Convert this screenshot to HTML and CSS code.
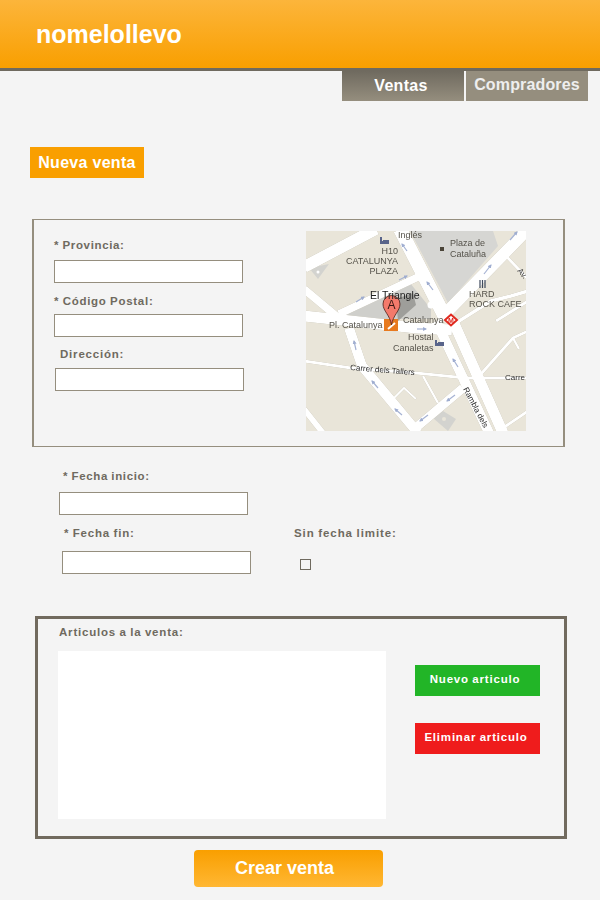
FILE: index.html
```html
<!DOCTYPE html>
<html lang="es">
<head>
<meta charset="utf-8">
<title>nomelollevo</title>
<link rel="stylesheet" href="styles.css">
</head>
<body>
<header class="site-header"><h1 class="brand">nomelollevo</h1></header>
<nav class="tabs">
  <a class="tab tab-active">Ventas</a>
  <a class="tab tab-idle">Compradores</a>
</nav>
<h2 class="page-title">Nueva venta</h2>
<form>
  <section class="location">
    <div class="location-fields">
      <label class="lbl lbl-prov">* Provincia:</label>
      <input class="txt txt-prov" type="text">
      <label class="lbl lbl-cp">* Código Postal:</label>
      <input class="txt txt-cp" type="text">
      <label class="lbl lbl-dir">Dirección:</label>
      <input class="txt txt-dir" type="text">
    </div>
    <svg class="map" viewBox="0 0 220 200" width="220" height="200" role="img" aria-label="Mapa">
      <defs>
        <marker id="arrowhead" markerWidth="4" markerHeight="4" refX="3" refY="2" orient="auto" markerUnits="userSpaceOnUse">
          <path d="M0 0 L4 2 L0 4 Z" fill="#9fadd0"/>
        </marker>
      </defs>
      <rect width="220" height="200" fill="#e9e5d9"/>
      <polygon points="104,0 187,0 192,15 142,72" fill="#d6d6d3"/>
      <polygon points="33,84 104,52 125,78 125,88 50,88" fill="#cfcfcb"/>
      <polygon points="3,37 23,33 12,48" fill="#d3d3cf"/>
      <polygon points="127,187 137,180 150,188 142,200" fill="#d3d3cf"/>
      <g class="roads" fill="none" stroke="#fff">
        <path d="M-2 36 L70 -2" stroke-width="12"/>
        <path d="M-2 58 L35 89" stroke-width="8"/>
        <path d="M-2 85 L110 97 L146 99" stroke-width="11"/>
        <path d="M33 83 L112 46" stroke-width="8"/>
        <path d="M94 -2 L140 88" stroke-width="14"/>
        <path d="M138 84 L222 -2" stroke-width="12"/>
        <path d="M200 25 L222 48" stroke-width="3"/>
        <path d="M150 92 L185 70 L205 65 L222 60" stroke-width="3.500"/>
        <path d="M190 90 L222 70" stroke-width="3"/>
        <path d="M130 90 L183 202" stroke-width="10"/>
        <path d="M147 90 L197 202" stroke-width="11"/>
        <path d="M43 97 L56 135 L112 202" stroke-width="10"/>
        <path d="M-2 130 L45 137 L110 142 L160 147 L222 147" stroke-width="3"/>
        <path d="M106 200 L157 157" stroke-width="9"/>
        <path d="M117 145 L132 172" stroke-width="2.500"/>
        <path d="M175 143 L207 107 L222 100" stroke-width="3"/>
        <path d="M207 107 L213 118" stroke-width="2.500"/>
        <path d="M197 197 L222 180" stroke-width="3"/>
        <path d="M87 168 L98 157 L110 168" stroke-width="2"/>
        <path d="M-2 178 L17 202" stroke-width="6"/>
      </g>
      <circle cx="125" cy="74" r="3.500" fill="#fff"/>
      <circle cx="12" cy="41" r="1.500" fill="#fff"/>
      <circle cx="138" cy="188" r="2" fill="#e9e5d9"/>
      <g fill="none" stroke="#a5b2d3" stroke-width="1.200">
        <path d="M50 71 L58 66" marker-end="url(#arrowhead)"/>
        <path d="M93 49 L101 45" marker-end="url(#arrowhead)"/>
        <path d="M101 20 L96 13" marker-end="url(#arrowhead)"/>
        <path d="M127 59 L121 51" marker-end="url(#arrowhead)"/>
        <path d="M178 43 L185 34" marker-end="url(#arrowhead)"/>
        <path d="M204 9 L211 1" marker-end="url(#arrowhead)"/>
        <path d="M111 98 L120 98" marker-end="url(#arrowhead)"/>
        <path d="M50 119 L48 110" marker-end="url(#arrowhead)"/>
        <path d="M72 157 L66 150" marker-end="url(#arrowhead)"/>
        <path d="M96 184 L89 178" marker-end="url(#arrowhead)"/>
        <path d="M152 136 L147 128" marker-end="url(#arrowhead)"/>
        <path d="M149 164 L141 170" marker-end="url(#arrowhead)"/>
        <path d="M122 184 L114 190" marker-end="url(#arrowhead)"/>
      </g>
      <rect x="78" y="88" width="14" height="12" fill="#e87a1f"/>
      <path d="M82 98 L89 92" stroke="#fff" stroke-width="2"/>
      <polygon points="90,68 107,62 110,74 92,90" fill="#8d8d8a" opacity=".75"/>
      <path d="M85.500 94 C84 84 77 80 77 73 A8.500 8.500 0 1 1 94 73 C94 80 87 84 85.500 94 Z" fill="#f47a6b" stroke="#4a1f18" stroke-width=".8"/>
      <polygon points="139,89 145,83.500 151,89 145,94.500" fill="#fff" stroke="#e0291f" stroke-width="2"/>
      <text class="m m-pin" x="85.500" y="78" text-anchor="middle">A</text>
      <text class="m m-metro" x="145" y="91.500" text-anchor="middle">M</text>
      <text class="m" x="92" y="7">Inglés</text>
      <text class="m" x="144" y="15">Plaza de</text>
      <text class="m" x="144" y="26">Cataluña</text>
      <rect x="134" y="16" width="4" height="4" fill="#4a4438"/>
      <text class="m" x="92" y="23" text-anchor="end">H10</text>
      <text class="m" x="92" y="33" text-anchor="end">CATALUNYA</text>
      <text class="m" x="92" y="43" text-anchor="end">PLAZA</text>
      <path d="M74 6 v7 h9 v-4 h-6 v1 h-1 v-4 Z" fill="#59648a"/>
      <path d="M174 49 v8 M176.500 49 v8 M179 49 v8" stroke="#3f4a5e" stroke-width="1.200"/>
      <text class="m" x="163" y="66">HARD</text>
      <text class="m" x="163" y="76">ROCK CAFE</text>
      <text class="m m-big" x="64" y="68">El Triangle</text>
      <text class="m" x="23" y="96.500">Pl. Catalunya</text>
      <text class="m" x="97" y="92">Catalunya</text>
      <text class="m" x="102" y="109">Hostal</text>
      <text class="m" x="87" y="120">Canaletas</text>
      <path d="M129 109 v6 h9 v-4 h-6 v1 h-1 v-3 Z" fill="#59648a"/>
      <text class="m m-road" x="44" y="139" transform="rotate(4.500 44 139)">Carrer dels Tallers</text>
      <text class="m m-road" x="199" y="149">Carre</text>
      <text class="m m-road" x="157" y="158" transform="rotate(62 157 158)">Rambla dels</text>
      <text class="m m-road" x="211" y="40" transform="rotate(50 211 40)">Av.</text>
    </svg>
  </section>
  <section class="dates">
    <label class="lbl lbl-start">* Fecha inicio:</label>
    <input class="txt txt-start" type="text">
    <div class="end-row">
      <div class="end-col">
        <label class="lbl lbl-end">* Fecha fin:</label>
        <input class="txt txt-end" type="text">
      </div>
      <div class="nolimit-col">
        <label class="lbl lbl-nolimit">Sin fecha limite:</label>
        <input class="check" type="checkbox">
      </div>
    </div>
  </section>
  <section class="items">
    <label class="lbl lbl-items">Articulos a la venta:</label>
    <div class="items-body">
      <div class="items-list"></div>
      <div class="items-actions">
        <button class="action action-new" type="button">Nuevo articulo</button>
        <button class="action action-del" type="button">Eliminar articulo</button>
      </div>
    </div>
  </section>
  <button class="submit" type="button">Crear venta</button>
</form>
</body>
</html>
```
FILE: styles.css
```css
* { box-sizing: border-box; }
html, body { margin: 0; padding: 0; }
body {
  width: 600px;
  height: 900px;
  overflow: hidden;
  background: #f4f4f4;
  font-family: "Liberation Sans", Arial, sans-serif;
  color: #6f6a5f;
}
.site-header {
  height: 71px;
  padding: 21px 0 0 36px;
  background: linear-gradient(#fcb53b, #f99f00) no-repeat 0 0 / 100% 68px;
  border-bottom: 3px solid #6f6a5f;
}
.brand {
  margin: 0;
  font-size: 25px;
  line-height: 27px;
  font-weight: bold;
  color: #fff;
}
.tabs {
  display: flex;
  justify-content: flex-end;
  gap: 2px;
  padding-right: 12px;
}
.tab {
  display: block;
  width: 122px;
  height: 30px;
  font-size: 16px;
  font-weight: bold;
  text-align: center;
}
.tab-active {
  padding: 5px 4px 0 0;
  line-height: 20px;
  letter-spacing: .3px;
  color: #fff;
  background: linear-gradient(#6f6a5f, #958e7e);
}
.tab-idle {
  padding-top: 4px;
  line-height: 20px;
  color: #eeeeee;
  background: #958e7e;
  letter-spacing: .15px;
}
.page-title {
  width: 114px;
  height: 31px;
  margin: 46px 0 0 30px;
  font-size: 16px;
  line-height: 31px;
  font-weight: bold;
  letter-spacing: .3px;
  text-align: center;
  color: #fff;
  background: #f99f00;
}
.location {
  display: flex;
  width: 533px;
  height: 228px;
  margin: 41px 0 0 32px;
  border: solid #958e7e;
  border-width: 1px 2px 1px 2px;
}
.location-fields {
  display: flex;
  flex-direction: column;
  align-items: flex-start;
  width: 272px;
  padding-left: 20px;
}
.lbl {
  display: block;
  height: 14px;
  font-size: 11.500px;
  line-height: 14px;
  font-weight: bold;
  letter-spacing: .8px;
  word-spacing: -.5px;
  white-space: nowrap;
  color: #6f6a5f;
}
.txt {
  display: block;
  width: 189px;
  height: 23px;
  padding: 0;
  background: #fff;
  border: 1px solid #958e7e;
}
.lbl-prov { margin-top: 18px; letter-spacing: .65px; }
.txt-prov { margin-top: 8px; }
.lbl-cp { margin-top: 11px; letter-spacing: .73px; }
.txt-cp { margin-top: 6px; }
.lbl-dir { margin: 10px 0 0 6px; }
.txt-dir { margin: 7px 0 0 1px; }
.map {
  display: block;
  margin-top: 11px;
  filter: blur(.4px);
}
.roads { filter: drop-shadow(0 0 .6px #a8a28c); }
.m {
  font-family: "Liberation Sans", Arial, sans-serif;
  font-size: 9px;
  fill: #55524a;
}
.m-big { font-size: 10.500px; fill: #222; }
.m-road { font-size: 8px; fill: #2c2c2c; }
.m-pin { font-size: 12px; fill: #3a1a14; }
.m-metro { font-size: 7px; font-weight: bold; fill: #e0291f; }
.lbl-start { margin: 22px 0 0 63px; letter-spacing: .65px; }
.txt-start { margin: 9px 0 0 59px; }
.end-row { display: flex; margin-top: 11px; }
.end-col { width: 294px; }
.lbl-end { margin-left: 64px; }
.lbl-nolimit { letter-spacing: .92px; }
.txt-end { margin: 11px 0 0 62px; }
.check {
  display: block;
  width: 11px;
  height: 11px;
  margin: 19px 0 0 6px;
  appearance: none;
  background: #f4f4f4;
  border: 1px solid #6f6a5f;
}
.items {
  width: 532px;
  height: 223px;
  margin: 42px 0 0 35px;
  padding-top: 6px;
  border: 3px solid #716a5e;
}
.lbl-items { margin-left: 21px; }
.items-body {
  display: flex;
  margin: 12px 0 0 20px;
}
.items-list {
  width: 328px;
  height: 168px;
  background: #fff;
}
.items-actions {
  display: flex;
  flex-direction: column;
  gap: 27px;
  margin: 14px 0 0 29px;
}
.action {
  display: block;
  width: 125px;
  height: 31px;
  padding: 0 5px 3px 0;
  border: 0;
  font-family: "Liberation Sans", Arial, sans-serif;
  font-size: 11.500px;
  font-weight: bold;
  letter-spacing: .8px;
  word-spacing: -.5px;
  color: #fff;
}
.action-new { background: #22b527; }
.action-del { background: #ef1c1c; padding-right: 3px; }
.submit {
  display: block;
  width: 189px;
  height: 37px;
  margin: 11px 0 0 194px;
  padding: 0 8px 0 0;
  border: 0;
  border-radius: 4px;
  font-family: "Liberation Sans", Arial, sans-serif;
  font-size: 18px;
  font-weight: bold;
  color: #fff;
  background: linear-gradient(#f99f00, #ffb733);
}
```
